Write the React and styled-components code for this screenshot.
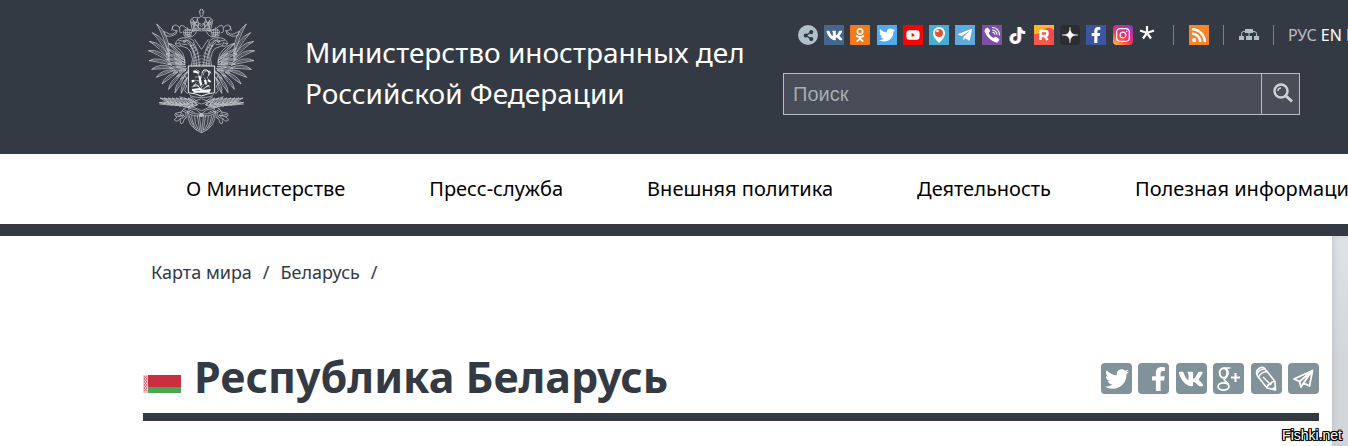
import styled, { createGlobalStyle } from 'styled-components'
import {
  FaShareAlt, FaVk, FaOdnoklassniki, FaTwitter, FaYoutube, FaTelegramPlane,
  FaTiktok, FaFacebookF, FaInstagram, FaRss
} from 'react-icons/fa'

const GlobalStyle = createGlobalStyle`
  * { box-sizing: border-box; }

  body {
    margin: 0;
    background-color: #ffffff;
    color: #333a44;
    font-family: "Noto Sans", "Open Sans", sans-serif;
    overflow: hidden;
  }
`

const Header = styled.header`
  display: flex;
  align-items: flex-start;
  height: 154px;
  padding-left: 140px;
  background-color: #333a44;
`

const EmblemLink = styled.a`
  display: block;
  flex: none;
  width: 125px;
  height: 145px;

  svg { display: block; }
`

const SiteName = styled.a`
  flex: 1;
  margin-top: 32px;
  padding-left: 40px;
  color: #ffffff;
  font-size: 28px;
  line-height: 41px;
  text-decoration: none;
  white-space: nowrap;
`

const Tools = styled.div`
  flex: none;
  width: 565px;
  padding-top: 25px;
`

const ToolsRow = styled.div`
  display: flex;
  align-items: center;
  height: 20px;
  padding-left: 15px;
  white-space: nowrap;
`

const SocialList = styled.div`
  display: flex;
  flex: none;
  justify-content: space-between;
  width: 361px;
`

const SocialLink = styled.a`
  display: flex;
  align-items: center;
  justify-content: center;
  width: 20px;
  height: 20px;
  border-radius: ${props => props.$radius || 0}px;
  background: ${props => props.$bg || 'transparent'};
  color: ${props => props.$color || '#ffffff'};
  font-size: ${props => props.$size || 16}px;
`

const TiktokIcon = styled(FaTiktok)`
  filter: drop-shadow(-1px 0 0 #5fc4cc) drop-shadow(1px 0 0 #d0506b);
`

const ToolGroup = styled.div`
  display: flex;
  flex: none;
  align-items: center;
  height: 20px;
  margin-left: 14px;
  padding-left: ${props => props.$pad || 15}px;
  border-left: 1px solid #7b8188;
`

const LangLink = styled.a`
  margin-right: 4px;
  color: ${props => props.$active ? '#b9bcc0' : '#ffffff'};
  font-size: 16px;
  line-height: 20px;
  text-decoration: none;
`

const Search = styled.form`
  display: flex;
  width: 517px;
  height: 42px;
  margin-top: 28px;
  border: 1px solid #b1bfc8;
  background-color: #484d57;

  input {
    flex: 1;
    min-width: 0;
    padding: 0 9px;
    border: 0;
    background: none;
    color: #ffffff;
    font-family: "Liberation Sans", Arial, sans-serif;
    font-size: 20px;
  }

  input::placeholder { color: #a7abb0; }

  button {
    display: flex;
    align-items: center;
    justify-content: center;
    width: 38px;
    padding: 0 0 3px 5px;
    border: 0;
    border-left: 1px solid #b1bfc8;
    background: none;
  }
`

const Nav = styled.nav`
  display: flex;
  align-items: center;
  height: 82px;
  padding-left: 186px;
  border-bottom: 12px solid #333a44;
  background-color: #ffffff;
  gap: 84px;

  a {
    flex: none;
    color: #000000;
    font-size: 20px;
    line-height: 28px;
    text-decoration: none;
    white-space: nowrap;
  }
`

const Page = styled.div`
  display: flex;
  min-height: 210px;
`

const Main = styled.main`
  flex: 1;
  padding: 22px 13px 0 143px;
`

const Aside = styled.aside`
  flex: none;
  width: 16px;
  background: linear-gradient(to bottom, #dfe2e7, #d3d6da 120px);
  box-shadow: inset 4px 0 8px -4px #b9bdc2;
`

const Breadcrumbs = styled.nav`
  display: flex;
  gap: 11px;
  padding-left: 8px;
  font-size: 18px;
  line-height: 28px;

  a {
    color: #333a44;
    text-decoration: none;
  }
`

const TitleRow = styled.div`
  display: flex;
  align-items: flex-end;
  height: 135px;
  border-bottom: 8px solid #333a44;

  > svg {
    flex: none;
    margin-bottom: 20px;
  }

  h1 {
    flex: 1;
    margin: 0 0 8px 13px;
    font-size: 43px;
    font-weight: bold;
    line-height: 56px;
    white-space: nowrap;
  }
`

const ShareList = styled.div`
  display: flex;
  flex: none;
  justify-content: space-between;
  width: 218px;
  margin-bottom: 19px;
`

const ShareButton = styled.button`
  display: flex;
  align-items: center;
  justify-content: center;
  width: 31px;
  height: 31px;
  padding: 0 0 0 ${props => props.$shift || 0}px;
  border: 0;
  border-radius: 4px;
  background-color: #81929a;
  color: #ffffff;
  font-size: ${props => props.$size || 24}px;
`

const Watermark = styled.span`
  position: absolute;
  right: 6px;
  bottom: 3px;
  color: #ffffff;
  font-family: "Liberation Sans", Arial, sans-serif;
  font-size: 14px;
  line-height: 16px;
  text-shadow: -1px -1px 0 #000, 1px -1px 0 #000, -1px 1px 0 #000, 1px 1px 0 #000,
    0 -1px 0 #000, 0 1px 0 #000, -1px 0 0 #000, 1px 0 0 #000;
`

// [base x, base y, tip x, tip y, half width, bend]
const outerFeathers = [
  [142, 232, 124, 280, 8, 4], [134, 228, 105, 278, 9, 5], [124, 222, 86, 268, 9, 7],
  [114, 216, 66, 252, 9, 8], [106, 210, 49, 232, 9, 9], [100, 204, 35, 208, 10, 10],
  [96, 196, 27, 182, 10, 12], [92, 188, 25, 152, 10, 14], [90, 180, 28, 124, 10, 16],
  [88, 172, 37, 98, 10, 16], [88, 162, 50, 72, 10, 14]
]

const innerFeathers = [
  [146, 214, 122, 238, 5, 3], [138, 210, 110, 230, 5, 4], [132, 206, 100, 218, 6, 5],
  [128, 200, 90, 206, 6, 5], [126, 194, 84, 192, 6, 6], [126, 188, 80, 178, 6, 6],
  [126, 182, 78, 162, 6, 6], [128, 178, 80, 146, 6, 5], [130, 174, 85, 130, 6, 3],
  [140, 206, 118, 214, 4, 3], [138, 200, 110, 202, 4, 3], [136, 194, 106, 190, 4, 3],
  [136, 188, 104, 176, 4, 3], [136, 182, 106, 160, 4, 2]
]

const laurel = [7, 6, 5, 4, 3, 2, 1, 0].flatMap(i => {
  const x = 172 - i * 12
  const y = 314 - i
  return [
    [x, y, x - 28, y - 20 + i, 5, 2],
    [x, y, x - 30, y + 8 - i, 5, -2]
  ]
})

const feather = ([x1, y1, x2, y2, w, bend]) => {
  const length = Math.hypot(x2 - x1, y2 - y1)
  const nx = (y2 - y1) / length
  const ny = -(x2 - x1) / length
  const at = side => {
    const k = side * w - bend
    return `${x1 + (x2 - x1) * 0.6 + nx * k} ${y1 + (y2 - y1) * 0.6 + ny * k}`
  }
  return {
    edge: `M${x1} ${y1}Q${at(1)} ${x2} ${y2}Q${at(-1)} ${x1} ${y1}Z`,
    quill: `M${x1} ${y1}Q${at(0)} ${x2} ${y2}`
  }
}

const Feathers = ({ list }) => list.map((item, i) => {
  const { edge, quill } = feather(item)
  return (
    <g key={i}>
      <path d={edge} fill='#333a44' />
      <path d={quill} strokeWidth='1.2' />
    </g>
  )
})

const EagleHalf = () => (
  <>
    <Feathers list={outerFeathers} />
    <Feathers list={innerFeathers} />
    <Feathers list={laurel} />
    <path d='M86 130Q112 136 128 160Q136 174 134 192' />
    <path d='M184 296Q130 324 58 312M184 312Q150 300 118 290' />
    {/* head and neck */}
    <path d='M164 126Q148 108 126 114Q110 116 106 132L120 128Q118 138 130 140Q146 142 152 156Q162 178 154 198' />
    <path d='M106 132Q112 142 124 138M130 122L138 124L132 128ZM114 120Q128 126 144 122M124 132L142 134M134 116Q150 122 156 140' />
    <path d='M144 118Q160 130 168 150M140 126Q158 140 162 164V198M150 134Q168 154 170 198M160 126Q176 150 178 198M164 118L184 148' />
    <path strokeWidth='1.8' d='M150 140L162 134M153 147L168 141M157 156L173 149M160 165L178 158M161 174L182 167M159 184L184 176M157 192L184 186M160 196L184 194' />
    {/* small crown and ribbon */}
    <path d='M133 108L130 94Q136 84 142 92Q150 84 155 95L152 109ZM142 92V108M136 104H151M142 82V90M137 88V106M148 88V107M132 98H154' />
    <path d='M171 93Q158 118 142 108M169 90Q146 94 131 78Q118 72 119 88Q116 98 126 98' />
    <path d='M119 84Q110 70 99 78Q92 92 110 92Q98 110 80 98L71 94L76 108Q94 112 108 102L112 91M99 78L95 92' />
    {/* large crown */}
    <path d='M184 93Q166 88 158 95L151 61Q157 50 170 53Q178 55 184 49M158 88Q170 82 184 86M160 60Q166 72 165 87M171 55Q178 70 175 86M154 62Q163 72 160 87M152 70Q166 62 184 73' />
    <path d='M184 48Q176 44 181 38H178V33H181V28H184M154 76L162 71L169 78L177 73L184 80M156 57L176 84M174 55L160 84M156 91L184 89' />
    {/* claw, sceptre and tail */}
    <path d='M150 320Q130 322 124 336L106 340Q102 350 112 350L103 360Q112 368 120 356L122 370Q130 374 132 358L139 354L137 340L150 334M124 336Q118 346 128 350M112 350L132 346M108 343L122 347M120 356L132 352M126 332L138 338M130 328L144 336M126 340L136 352' />
    <path d='M143 332Q142 358 154 377Q166 391 184 398M147 344Q151 364 163 383M155 346Q154 364 171 390M164 348Q162 370 176 391M172 346L179 392M178 344L184 398M143 334Q160 344 181 342M143 340Q160 350 181 348' />
    <path d='M143 212L134 224L139 236L132 248L140 258L134 272L143 282M148 283Q158 294 184 292M144 324L170 330L184 342M152 318L184 332M150 290L172 304M144 328L164 338' />
  </>
)

const Emblem = () => (
  <svg width='125' height='145' viewBox='0 0 375 435' fill='none' stroke='#c6cace' strokeWidth='2.2'>
    <EagleHalf />
    <g transform='translate(369 0) scale(-1 1)'><EagleHalf /></g>
    <path fill='#333a44' stroke='#eef0f1' strokeWidth='3' d='M145 198H224V278Q204 280 184 288Q166 280 145 278Z' />
    <path d='M161 219L168 209L178 214L174 225L184 232L178 243L164 240L156 248M190 226Q190 210 206 214Q211 226 202 231L208 246M169 247L160 262M177 243L184 263L194 250L210 262M192 232L202 247M164 231H176M188 215L177 251M155 260L178 257' />
    <path stroke='#ffffff' strokeWidth='6' d='M160 214L176 218M178 228L184 256M194 240L199 252M155 244L163 242M204 240L212 246M156 270L179 267L188 273L212 270M160 275H210' />
    <path stroke='#ffffff' strokeWidth='3' d='M186 218Q190 206 200 210T206 226M208 212L212 220M160 256Q170 250 178 262T196 262L208 256' />
    <circle cx='184' cy='345' r='5' fill='#b9bec4' />
  </svg>
)

const PeriscopeIcon = () => (
  <svg width='14' height='18' viewBox='0 0 14 18'>
    <path d='M7 1A6 6 0 0 0 1 7C1 11 4 14 7 17C10 14 13 11 13 7A6 6 0 0 0 7 1Z' fill='#fff' />
    <circle cx='7' cy='7' r='4' fill='#dd5335' />
    <circle cx='5.5' cy='5' r='1.3' fill='#fff' />
  </svg>
)

const ViberIcon = () => (
  <svg width='18' height='18' viewBox='0 0 18 18' fill='none' stroke='#fff' strokeLinecap='round'>
    <path d='M2 3L4.500 1.500Q7 3.500 7 5.500L5.500 7Q7 10.500 10.500 12L12.500 10.800Q15 11.500 16.500 13.800L14.500 16.500Q12 17 7.500 13.500T1.500 5.500Z' fill='#fff' stroke='none' />
    <path d='M9.500 1.500Q16 2 16.500 9M9.500 4Q13.500 4.500 14 8.500M9.800 6.300Q11.500 6.600 11.800 8.300' strokeWidth='1.100' />
  </svg>
)

const RutubeIcon = () => (
  <svg width='20' height='20' viewBox='0 0 20 20'>
    <path d='M0 0H20V20H0Z' fill='#f74750' />
    <path d='M0 0H20V5Q14 0 8 6Q4 10 0 10Z' fill='#fdb52b' />
    <path d='M0 9Q7 9 10 4L18 20H0Z' fill='#f8594d' />
    <path d='M6.500 15V6H11.500Q13.500 6 13.500 8.500T11.500 11H7M11 11.500L13.500 15' fill='none' stroke='#fff' strokeWidth='2.500' />
  </svg>
)

const ZenIcon = () => (
  <svg width='20' height='20' viewBox='0 0 20 20'>
    <path d='M10 2C10.300 8 12 9.700 18 10C12 10.300 10.300 12 10 18C9.700 12 8 10.300 2 10C8 9.700 9.700 8 10 2Z' fill='#fff' stroke='#fff' strokeWidth='.4' />
  </svg>
)

const AsteriskIcon = () => (
  <svg width='20' height='20' viewBox='0 0 20 20' stroke='#fff' strokeWidth='2.200'>
    <path d='M8 8V1M8 8L1 5.500M8 8L15 5.500M8 8L4 13.500M8 8L12 13.500' />
  </svg>
)

const SitemapIcon = () => (
  <svg width='20' height='12' viewBox='0 0 20 12' fill='#b1bfc8'>
    <path d='M6 0H14V4H6ZM0 7H5V11H0ZM7 7H13V11H7ZM15 7H20V11H15Z' />
    <path d='M2.500 7V4.500Q2.500 2.500 5 2.500H15Q17.500 2.500 17.500 4.500V7M10 3V8' fill='none' stroke='#b1bfc8' />
  </svg>
)

const SearchIcon = () => (
  <svg width='22' height='22' viewBox='0 0 22 22' fill='none' stroke='#ccd1d6'>
    <circle cx='9' cy='9' r='6.500' strokeWidth='2.500' />
    <path d='M14 14L20 19.500' strokeWidth='3' />
    <path d='M6 9Q6 6 9 6' strokeWidth='1.500' />
  </svg>
)

const Flag = () => (
  <svg width='38' height='18' viewBox='0 0 38 18' role='img' aria-label='Флаг Беларуси'>
    <path d='M0 0H38V12H0Z' fill='#c92f3e' />
    <path d='M0 12H38V18H0Z' fill='#4ba651' />
    <path d='M0 0H5V18H0Z' fill='#f1ccd0' />
    <path d='M1 1L4 4L1 7L4 10L1 13L4 16M4 1L1 4L4 7L1 10L4 13L1 16' fill='none' stroke='#d45663' strokeWidth='.8' />
  </svg>
)

const GooglePlusIcon = () => (
  <svg width='25' height='26' viewBox='0 0 25 26' fill='none' stroke='#fff'>
    <ellipse cx='7.500' cy='7' rx='3.800' ry='4.700' strokeWidth='2' />
    <ellipse cx='7.500' cy='20.500' rx='5.500' ry='3.700' strokeWidth='1.800' />
    <path d='M7.500 2H14.500M10.500 3Q12.500 5 12 8Q11 11 9 12.500T10 15.500L12.500 18' strokeWidth='1.700' />
    <path d='M15 11.500H24M19.500 7V16' strokeWidth='2' />
  </svg>
)

const PencilIcon = () => (
  <svg width='23' height='26' viewBox='0 0 23 26' fill='none' stroke='#fff' strokeWidth='1.600' strokeLinejoin='round'>
    <path d='M2.500 10Q0 5 4 2.500T10.500 3.500L20 15.500L20.500 24L12 22Z' />
    <path d='M2 8Q4 3.500 9.500 3M3.500 11Q6 6 12 5.500M12 22Q13 17.500 15.500 18.500Q16 15 20 15.500M8 11L15.500 18.500' />
    <path d='M17.500 23L20 21.500' strokeWidth='2' />
  </svg>
)

const PlaneIcon = () => (
  <svg width='21' height='20' viewBox='0 0 21 20' fill='none' stroke='#fff' strokeWidth='1.800' strokeLinejoin='round'>
    <path d='M1 10L19.500 1.500L16.500 17L10.500 14L8 18L6.500 12.500ZM6.500 12.500L19 2L10.500 14' />
  </svg>
)

const socials = [
  { name: 'Поделиться', icon: <FaShareAlt />, bg: '#b1bfc8', color: '#333a44', radius: 10, size: 11 },
  { name: 'ВКонтакте', icon: <FaVk />, bg: '#45668e', size: 17 },
  { name: 'Одноклассники', icon: <FaOdnoklassniki />, bg: '#f27a1a', radius: 1, size: 14 },
  { name: 'Twitter', icon: <FaTwitter />, bg: '#50abf1' },
  { name: 'YouTube', icon: <FaYoutube />, bg: '#ff0000', size: 14 },
  { name: 'Periscope', icon: <PeriscopeIcon />, bg: '#46aed0' },
  { name: 'Telegram', icon: <FaTelegramPlane />, bg: '#5ea9dd' },
  { name: 'Viber', icon: <ViberIcon />, bg: '#7d51a0' },
  { name: 'TikTok', icon: <TiktokIcon />, size: 17 },
  { name: 'Rutube', icon: <RutubeIcon /> },
  { name: 'Дзен', icon: <ZenIcon />, bg: '#2b2d33', radius: 4 },
  { name: 'Facebook', icon: <FaFacebookF />, bg: '#3b559f' },
  {
    name: 'Instagram',
    icon: <FaInstagram />,
    bg: 'linear-gradient(35deg, #ffc83d, #f5384f 40%, #d42b9a 65%, #7b3fd0)',
    radius: 4
  },
  { name: 'Примечание', icon: <AsteriskIcon /> }
]

const sections = [
  'О Министерстве', 'Пресс-служба', 'Внешняя политика', 'Деятельность', 'Полезная информация'
]

export default () => (
  <>
    <GlobalStyle />
    <Header>
      <EmblemLink href='#' aria-label='На главную'><Emblem /></EmblemLink>
      <SiteName href='#'>Министерство иностранных дел<br />Российской Федерации</SiteName>
      <Tools>
        <ToolsRow>
          <SocialList>
            {socials.map(s => (
              <SocialLink
                key={s.name}
                href='#'
                aria-label={s.name}
                $bg={s.bg}
                $color={s.color}
                $radius={s.radius}
                $size={s.size}
              >{s.icon}</SocialLink>
            ))}
          </SocialList>
          <ToolGroup>
            <SocialLink href='#' aria-label='RSS' $bg='#f68428'><FaRss /></SocialLink>
          </ToolGroup>
          <ToolGroup>
            <SocialLink href='#' aria-label='Карта сайта'><SitemapIcon /></SocialLink>
          </ToolGroup>
          <ToolGroup $pad={14}>
            <LangLink href='#' $active>РУС</LangLink>
            <LangLink href='#'>EN</LangLink>
            <LangLink href='#'>FR</LangLink>
          </ToolGroup>
        </ToolsRow>
        <Search>
          <input type='search' aria-label='Поиск' placeholder='Поиск' />
          <button type='button' aria-label='Найти'><SearchIcon /></button>
        </Search>
      </Tools>
    </Header>
    <Nav>
      {sections.map(s => <a key={s} href='#'>{s}</a>)}
    </Nav>
    <Page>
      <Main>
        <Breadcrumbs>
          <a href='#'>Карта мира</a>
          <span>/</span>
          <a href='#'>Беларусь</a>
          <span>/</span>
        </Breadcrumbs>
        <TitleRow>
          <Flag />
          <h1>Республика Беларусь</h1>
          <ShareList>
            <ShareButton type='button' aria-label='Twitter'><FaTwitter /></ShareButton>
            <ShareButton type='button' aria-label='Facebook' $shift={10}><FaFacebookF /></ShareButton>
            <ShareButton type='button' aria-label='ВКонтакте' $size={26}><FaVk /></ShareButton>
            <ShareButton type='button' aria-label='Google Plus'><GooglePlusIcon /></ShareButton>
            <ShareButton type='button' aria-label='Живой Журнал'><PencilIcon /></ShareButton>
            <ShareButton type='button' aria-label='Telegram'><PlaneIcon /></ShareButton>
          </ShareList>
        </TitleRow>
      </Main>
      <Aside />
    </Page>
    <Watermark>Fishki.net</Watermark>
  </>
)
